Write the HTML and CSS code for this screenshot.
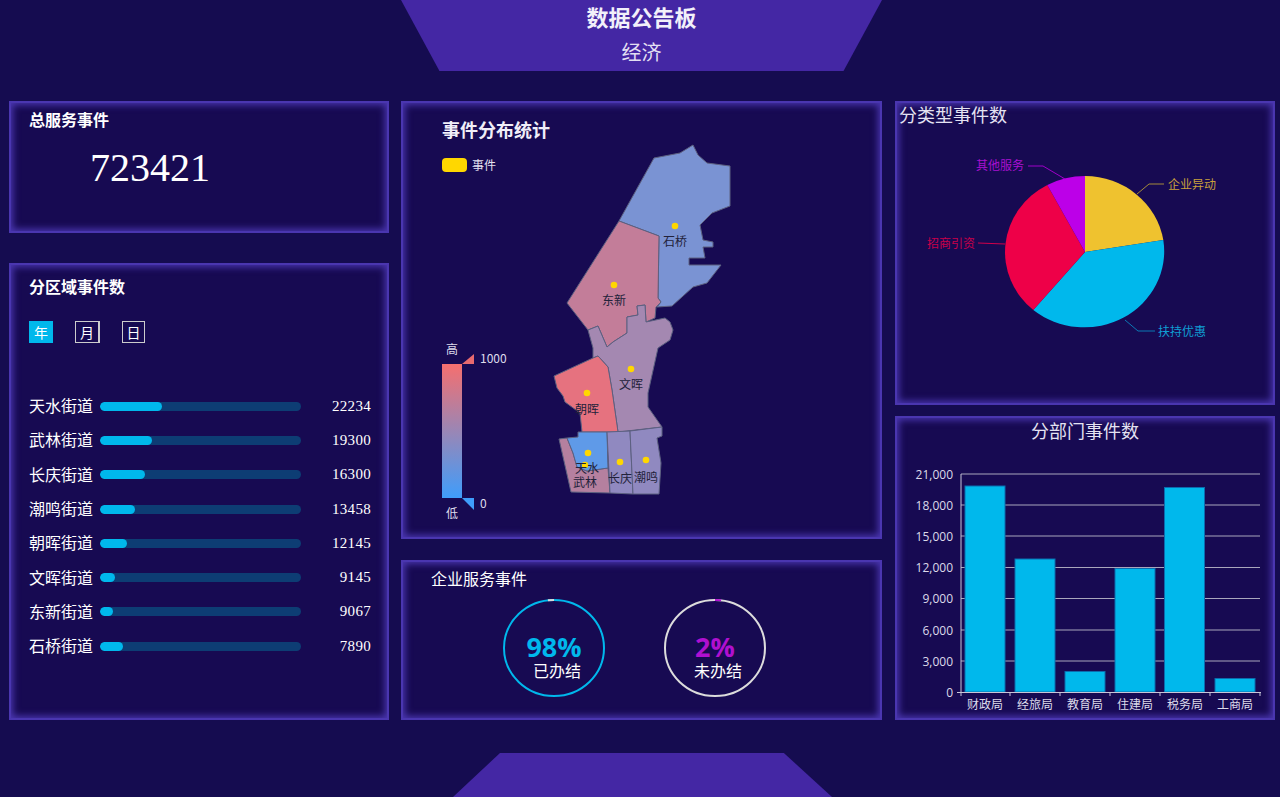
FILE: index.html
```html
<!DOCTYPE html>
<html lang="zh-CN">
<head>
    <meta charset="UTF-8">
    <meta name="viewport" content="width=device-width, initial-scale=1.0">
    <title>数据公告板</title>
    <link rel="stylesheet" href="styles.css">
</head>
<body>
    <header class="top">
        <h1>数据公告板</h1>
        <p>经济</p>
    </header>

    <main class="board">
        <section class="col">
            <div class="panel total">
                <h2>总服务事件</h2>
                <div class="total-num">723421</div>
            </div>

            <div class="panel area">
                <h2>分区域事件数</h2>
                <div class="tabs">
                    <span class="tab on">年</span>
                    <span class="tab wide">月</span>
                    <span class="tab">日</span>
                </div>
                <ul class="rows">
                    <li class="row"><span class="name">天水街道</span><span class="track"><i style="width:62px"></i></span><span class="num">22234</span></li>
                    <li class="row"><span class="name">武林街道</span><span class="track"><i style="width:52px"></i></span><span class="num">19300</span></li>
                    <li class="row"><span class="name">长庆街道</span><span class="track"><i style="width:45px"></i></span><span class="num">16300</span></li>
                    <li class="row"><span class="name">潮鸣街道</span><span class="track"><i style="width:35px"></i></span><span class="num">13458</span></li>
                    <li class="row"><span class="name">朝晖街道</span><span class="track"><i style="width:27px"></i></span><span class="num">12145</span></li>
                    <li class="row"><span class="name">文晖街道</span><span class="track"><i style="width:15px"></i></span><span class="num">9145</span></li>
                    <li class="row"><span class="name">东新街道</span><span class="track"><i style="width:13px"></i></span><span class="num">9067</span></li>
                    <li class="row"><span class="name">石桥街道</span><span class="track"><i style="width:23px"></i></span><span class="num">7890</span></li>
                </ul>
            </div>
        </section>

        <section class="col mid">
            <div class="panel map">
                <svg class="canvas" viewBox="401 101 481 438" width="481" height="438">
                    <defs>
                        <linearGradient id="range" x1="0" y1="0" x2="0" y2="1">
                            <stop offset="0" stop-color="#f56f6f"/>
                            <stop offset="1" stop-color="#3f9dfb"/>
                        </linearGradient>
                    </defs>

                    <g class="areas">
                        <polygon fill="#7a93d3" points="693,145 698,155 707,163 730,166 730,206 712,213 700,225 703,240 713,242 713,247 703,247 705,258 689,258 689,265 721,265 707,283 693,287 672,306 657,307 661,302 658,298 659,236 619,221 654,158 680,153"/>
                        <polygon fill="#c37d99" points="619,221 659,236 658,298 661,302 656,307 655,318 646,322 645,305 637,306 638,315 627,317 627,333 613,342 607,347 598,326 588,330 567,303"/>
                        <polygon fill="#a488b1" points="588,330 598,326 607,347 613,342 627,333 627,317 638,315 637,306 645,305 646,322 665,318 670,322 673,330 670,340 658,348 648,393 648,407 662,427 618,432 612,390 608,367 598,356 593,358 593,348"/>
                        <polygon fill="#e6727f" points="598,356 608,367 612,390 618,432 582,432 580,413 565,402 563,396 557,388 554,376 593,358"/>
                        <polygon fill="#b5809f" points="559,439 567,438 573,453 577,467 587,471 608,468 610,493 571,492"/>
                        <polygon fill="#5f9ae8" points="567,438 578,437 578,432 607,432 608,468 587,471 577,467 573,453"/>
                        <polygon fill="#9089c0" points="607,432 630,431 633,494 610,493"/>
                        <polygon fill="#9089c0" points="630,431 662,427 662,436 657,438 661,463 659,494 633,494"/>
                    </g>

                    <g class="dots">
                        <circle cx="675" cy="226" r="3.3"/>
                        <circle cx="614" cy="285" r="3.3"/>
                        <circle cx="631" cy="369" r="3.3"/>
                        <circle cx="587" cy="393" r="3.3"/>
                        <circle cx="588" cy="453" r="3.3"/>
                        <circle cx="585" cy="465" r="3.3"/>
                        <circle cx="620" cy="462" r="3.3"/>
                        <circle cx="646" cy="460" r="3.3"/>
                    </g>

                    <g class="area-names">
                        <text x="675" y="246">石桥</text>
                        <text x="614" y="305">东新</text>
                        <text x="631" y="389">文晖</text>
                        <text x="587" y="414">朝晖</text>
                        <text x="587" y="473">天水</text>
                        <text x="585" y="487">武林</text>
                        <text x="620" y="483">长庆</text>
                        <text x="646" y="482">潮鸣</text>
                    </g>

                    <rect x="442" y="364" width="20" height="134" fill="url(#range)"/>
                    <polygon points="462,364 474,354 474,364" fill="#e86a6f"/>
                    <polygon points="462,498 474,498 474,510" fill="#3f9dfb"/>
                    <g class="range-text">
                        <text x="452" y="354" text-anchor="middle">高</text>
                        <text x="480" y="363">1000</text>
                        <text x="480" y="508">0</text>
                        <text x="452" y="518" text-anchor="middle">低</text>
                    </g>
                </svg>
                <h2 class="map-title">事件分布统计</h2>
                <div class="legend"><i></i>事件</div>
            </div>

            <div class="panel firm">
                <h2 class="firm-title">企业服务事件</h2>
                <div class="gauges">
                    <div class="gauge done">
                        <svg class="canvas" viewBox="0 0 102 98" width="102" height="98">
                            <ellipse class="ring" cx="51" cy="49" rx="50" ry="48" pathLength="100" stroke="#00b8ec"/>
                            <ellipse class="ring" cx="51" cy="49" rx="50" ry="48" pathLength="100" stroke="#d8d8d8" stroke-dasharray="2 98" stroke-dashoffset="27"/>
                        </svg>
                        <b>98%</b>
                        <span>已办结</span>
                    </div>
                    <div class="gauge todo">
                        <svg class="canvas" viewBox="0 0 102 98" width="102" height="98">
                            <ellipse class="ring" cx="51" cy="49" rx="50" ry="48" pathLength="100" stroke="#dcdcdc"/>
                            <ellipse class="ring" cx="51" cy="49" rx="50" ry="48" pathLength="100" stroke="#b010d0" stroke-dasharray="2 98" stroke-dashoffset="25"/>
                        </svg>
                        <b>2%</b>
                        <span>未办结</span>
                    </div>
                </div>
            </div>
        </section>

        <section class="col right">
            <div class="panel kinds">
                <svg class="canvas" viewBox="895 101 380 304" width="380" height="304">
                    <path fill="#efc22f" d="M1085 252 V176 A80 76 0 0 1 1163.3 240 Z"/>
                    <path fill="#00b8ec" d="M1085 252 L1163.3 240 A80 76 0 0 1 1033.3 310 Z"/>
                    <path fill="#ee0048" d="M1085 252 L1033.3 310 A80 76 0 0 1 1047.3 185 Z"/>
                    <path fill="#bc00e8" d="M1085 252 L1047.3 185 A80 76 0 0 1 1085 176 Z"/>

                    <polyline class="lead" stroke="#a58a3a" points="1137,194 1149,184 1164,184"/>
                    <polyline class="lead" stroke="#0b78b4" points="1125,320 1138,331 1155,331"/>
                    <polyline class="lead" stroke="#d0004a" points="1005,244 978,243"/>
                    <polyline class="lead" stroke="#a000c8" points="1065,179 1043,166 1028,166"/>

                    <g class="pie-text">
                        <text x="1168" y="189" fill="#c9a13c">企业异动</text>
                        <text x="1158" y="336" fill="#0f9fd4">扶持优惠</text>
                        <text x="927" y="248" fill="#c8004a">招商引资</text>
                        <text x="976" y="170" fill="#a810d0">其他服务</text>
                    </g>
                </svg>
                <h2 class="chart-title">分类型事件数</h2>
            </div>

            <div class="panel depts">
                <svg class="canvas" viewBox="895 416 380 304" width="380" height="304">
                    <g class="grid">
                        <line x1="961" x2="1260" y1="474" y2="474"/>
                        <line x1="961" x2="1260" y1="505" y2="505"/>
                        <line x1="961" x2="1260" y1="536" y2="536"/>
                        <line x1="961" x2="1260" y1="567.5" y2="567.5"/>
                        <line x1="961" x2="1260" y1="598.5" y2="598.5"/>
                        <line x1="961" x2="1260" y1="630" y2="630"/>
                        <line x1="961" x2="1260" y1="661" y2="661"/>
                    </g>

                    <g class="bars">
                        <rect x="965" y="486" width="40" height="206"/>
                        <rect x="1015" y="559" width="40" height="133"/>
                        <rect x="1065" y="671.5" width="40" height="20.5"/>
                        <rect x="1115" y="568.5" width="40" height="123.5"/>
                        <rect x="1164.5" y="487.5" width="40" height="204.5"/>
                        <rect x="1215" y="678.5" width="40" height="13.5"/>
                    </g>

                    <g class="axis">
                        <line x1="961" x2="961" y1="474" y2="696"/>
                        <line x1="957" x2="1261" y1="692.5" y2="692.5"/>
                        <line x1="1010" x2="1010" y1="692" y2="696"/>
                        <line x1="1060" x2="1060" y1="692" y2="696"/>
                        <line x1="1110" x2="1110" y1="692" y2="696"/>
                        <line x1="1160" x2="1160" y1="692" y2="696"/>
                        <line x1="1210" x2="1210" y1="692" y2="696"/>
                        <line x1="1260" x2="1260" y1="692" y2="696"/>
                    </g>

                    <g class="y-text">
                        <text x="953" y="479">21,000</text>
                        <text x="953" y="510">18,000</text>
                        <text x="953" y="541">15,000</text>
                        <text x="953" y="572">12,000</text>
                        <text x="953" y="603">9,000</text>
                        <text x="953" y="635">6,000</text>
                        <text x="953" y="666">3,000</text>
                        <text x="953" y="697">0</text>
                    </g>

                    <g class="x-text">
                        <text x="985" y="709">财政局</text>
                        <text x="1035" y="709">经旅局</text>
                        <text x="1085" y="709">教育局</text>
                        <text x="1135" y="709">住建局</text>
                        <text x="1185" y="709">税务局</text>
                        <text x="1235" y="709">工商局</text>
                    </g>
                </svg>
                <h2 class="chart-title center">分部门事件数</h2>
            </div>
        </section>
    </main>

    <footer class="foot"></footer>
</body>
</html>
```

FILE: styles.css
```css
* {
    margin: 0;
    padding: 0;
    box-sizing: border-box;
}

body {
    width: 1280px;
    height: 797px;
    overflow: hidden;
    background: #150c50;
    color: #fff;
    font-family: "Noto Sans CJK SC", "Noto Sans", sans-serif;
    display: flex;
    flex-direction: column;
}

/* top and bottom trapezoids */
.top {
    width: 481px;
    height: 71px;
    margin-left: 401px;
    background: #4427a4;
    clip-path: polygon(0 0, 100% 0, 92% 100%, 8% 100%);
    text-align: center;
}

.top h1 {
    font-size: 22px;
    line-height: 32px;
    color: #f2f0fa;
}

.top p {
    margin-top: 4px;
    font-size: 20px;
    line-height: 32px;
    color: #e2dff2;
}

.foot {
    width: 379px;
    height: 44px;
    margin: auto 0 0 453px;
    background: #4427a4;
    clip-path: polygon(12.4% 0, 87.3% 0, 100% 100%, 0 100%);
}

.board {
    display: flex;
    gap: 12px;
    padding: 30px 0 0 9px;
}

.col {
    display: flex;
    flex-direction: column;
    width: 380px;
    gap: 30px;
}

.col.mid {
    width: 481px;
    gap: 21px;
}

.col.right {
    gap: 11px;
    margin-left: 1px;
}

.panel {
    position: relative;
    background: #170a52;
    box-shadow: inset 0 0 0 2px #4a36b0, inset 0 0 7px 4px #4a36b0;
}

.panel h2 {
    position: relative;
    font-size: 16px;
    line-height: 24px;
    font-weight: 700;
}

.canvas {
    position: absolute;
    top: 0;
    left: 0;
}

/* left column */
.total {
    height: 132px;
    padding: 6px 0 0 20px;
}

.total-num {
    margin: 13px 0 0 61px;
    font-family: "Liberation Serif", serif;
    font-size: 40px;
    line-height: 48px;
}

.area {
    height: 457px;
    padding: 11px 18px 0 20px;
}

.tabs {
    display: flex;
    gap: 22px;
    margin-top: 23px;
}

.tab {
    width: 23px;
    height: 22px;
    border: 1px solid #ccc;
    font-size: 14px;
    line-height: 20px;
    text-align: center;
}

.tab.on {
    width: 24px;
    background: #00b8ec;
    border-color: #00b8ec;
}

.tab.wide {
    width: 25px;
    border-right-width: 2px;
}

.rows {
    margin-top: 46px;
    list-style: none;
}

.row {
    display: flex;
    align-items: center;
    height: 34.3px;
}

.name {
    width: 71px;
    margin-top: -2px;
    font-size: 16px;
    white-space: nowrap;
}

.track {
    width: 201px;
    height: 9px;
    border-radius: 5px;
    background: #0d3d74;
    overflow: hidden;
}

.track i {
    display: block;
    height: 100%;
    border-radius: 5px;
    background: #00b8ec;
}

.num {
    flex: 1;
    text-align: right;
    font-family: "Liberation Serif", serif;
    font-size: 15px;
    letter-spacing: 0.3px;
}

/* map panel */
.map {
    height: 438px;
    padding: 16px 0 0 41px;
}

.panel .map-title {
    font-size: 18px;
    color: #f0eef8;
}

.legend {
    position: relative;
    display: flex;
    align-items: center;
    gap: 5px;
    margin-top: 15px;
    font-size: 12px;
    color: #e4e2f0;
}

.legend i {
    width: 25px;
    height: 14px;
    border-radius: 4px;
    background: #ffd700;
}

.areas polygon {
    stroke: #5c6080;
    stroke-width: 1;
}

.dots circle {
    fill: #ffd700;
}

.area-names text {
    font-size: 12px;
    fill: #22223a;
    text-anchor: middle;
}

.range-text text {
    font-size: 12px;
    fill: #dedcec;
}

/* company panel */
.firm {
    height: 160px;
    padding: 6px 0 0 30px;
}

.panel .firm-title {
    font-weight: 400;
}

.gauges {
    display: flex;
    gap: 59px;
    margin: 9px 0 0 72px;
}

.gauge {
    position: relative;
    width: 102px;
    height: 98px;
    padding-top: 36px;
    text-align: center;
}

.gauge b {
    position: relative;
    display: block;
    font-family: "Open Sans", sans-serif;
    font-size: 27px;
    font-weight: 700;
    line-height: 24px;
}

.gauge span {
    position: relative;
    display: block;
    margin-left: 6px;
    font-size: 16px;
    line-height: 22px;
}

.done b {
    color: #00b8ec;
}

.todo b {
    color: #b010d0;
}

.ring {
    fill: none;
    stroke-width: 2;
}

/* right column */
.kinds,
.depts {
    height: 304px;
}

.panel .chart-title {
    padding-left: 4px;
    font-size: 18px;
    line-height: 26px;
    font-weight: 400;
    color: #e4e2f2;
}

.panel .chart-title.center {
    padding: 1px 0 0;
    text-align: center;
}

.lead {
    fill: none;
    stroke-width: 1;
}

.pie-text text {
    font-size: 12px;
}

.grid line {
    stroke: #a9a6bc;
    stroke-width: 1;
}

.bars rect {
    fill: #00b8ec;
    stroke: #0b6cae;
    stroke-width: 1;
}

.axis line {
    stroke: #c8c6d8;
    stroke-width: 1;
}

.y-text text {
    font-family: "Open Sans", sans-serif;
    font-size: 12px;
    fill: #dcdaea;
    text-anchor: end;
}

.x-text text {
    font-size: 12px;
    fill: #dcdaea;
    text-anchor: middle;
}
```
